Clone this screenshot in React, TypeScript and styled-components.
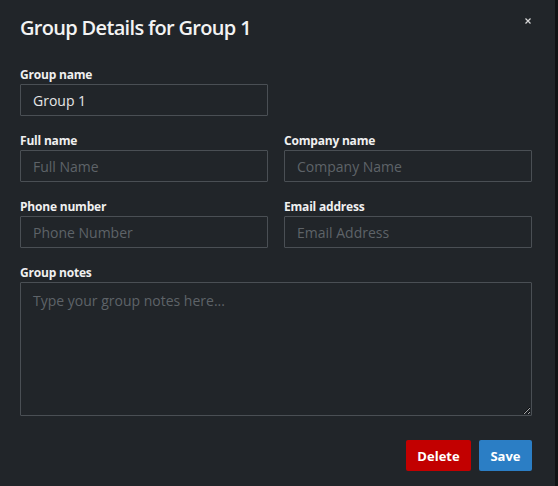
import React from 'react'
import styled, { createGlobalStyle } from 'styled-components'

const GlobalStyle = createGlobalStyle`
  html, body {
    margin: 0;
    padding: 0;
    background: #111315;
  }
  * {
    box-sizing: border-box;
  }
`

const Modal = styled.div`
  width: 555px;
  height: 486px;
  background: #212529;
  color: #f1f1f1;
  font-family: 'Open Sans', 'Noto Sans', sans-serif;
  padding: 14px 23px 15px 20px;
  display: flex;
  flex-direction: column;
`

const Header = styled.div`
  display: flex;
  justify-content: space-between;
  align-items: flex-start;
  height: 52px;
`

const Title = styled.h2`
  margin: 0;
  font-size: 20px;
  line-height: 28px;
  font-weight: 600;
  letter-spacing: -0.68px;
  color: #f3f3f3;
`

const CloseButton = styled.button`
  width: 8px;
  height: 8px;
  margin-top: 3px;
  padding: 0;
  border: 0;
  background: none;
  display: flex;
  cursor: pointer;
`

const Form = styled.div`
  display: flex;
  flex-direction: column;
  gap: 16px;
`

const Row = styled.div<{ $cols?: number }>`
  display: grid;
  grid-template-columns: repeat(${p => p.$cols ?? 2}, 248px);
  column-gap: 16px;
`

const Field = styled.label`
  display: flex;
  flex-direction: column;
`

const Label = styled.span`
  font-size: 12px;
  line-height: 17px;
  font-weight: 700;
  color: #f0f0f0;
  margin-bottom: 1px;
  letter-spacing: -0.2px;
`

const Input = styled.input`
  height: 32px;
  width: 100%;
  padding: 0 12px;
  background: #212529;
  border: 1px solid #4a4f54;
  border-radius: 1px;
  color: #e6e6e6;
  font-family: inherit;
  font-size: 14px;
  outline: none;

  &::placeholder {
    color: #5e6368;
  }
`

const TextArea = styled.textarea`
  height: 134px;
  width: 512px;
  padding: 8px 12px;
  background: #212529;
  border: 1px solid #4a4f54;
  border-radius: 1px;
  color: #e6e6e6;
  font-family: inherit;
  font-size: 14px;
  outline: none;
  resize: vertical;

  &::placeholder {
    color: #5e6368;
  }
`

const Footer = styled.div`
  display: flex;
  justify-content: flex-end;
  gap: 8px;
  margin-top: auto;
`

const Button = styled.button<{ $variant: 'danger' | 'primary' }>`
  height: 31px;
  min-width: ${p => (p.$variant === 'danger' ? '65px' : '53px')};
  padding: 0 11px;
  border: 0;
  border-radius: 2px;
  background: ${p => (p.$variant === 'danger' ? '#c20000' : '#2b7ec5')};
  color: #ffffff;
  font-family: inherit;
  font-size: 13px;
  font-weight: 700;
  cursor: pointer;
`

const App: React.FC = () => {
  return (
    <>
      <GlobalStyle />
      <Modal>
        <Header>
          <Title>Group Details for Group 1</Title>
          <CloseButton aria-label="Close">
            <svg width="8" height="8" viewBox="0 0 8 8">
              <path d="M1.5 1.5L6.5 6.5M6.5 1.5L1.5 6.5" stroke="#d8d8d8" strokeWidth="1.2" />
            </svg>
          </CloseButton>
        </Header>
        <Form>
          <Row>
            <Field>
              <Label>Group name</Label>
              <Input defaultValue="Group 1" />
            </Field>
          </Row>
          <Row>
            <Field>
              <Label>Full name</Label>
              <Input placeholder="Full Name" />
            </Field>
            <Field>
              <Label>Company name</Label>
              <Input placeholder="Company Name" />
            </Field>
          </Row>
          <Row>
            <Field>
              <Label>Phone number</Label>
              <Input placeholder="Phone Number" />
            </Field>
            <Field>
              <Label>Email address</Label>
              <Input placeholder="Email Address" />
            </Field>
          </Row>
          <Field>
            <Label>Group notes</Label>
            <TextArea placeholder="Type your group notes here..." />
          </Field>
        </Form>
        <Footer>
          <Button $variant="danger">Delete</Button>
          <Button $variant="primary">Save</Button>
        </Footer>
      </Modal>
    </>
  )
}

export default App
